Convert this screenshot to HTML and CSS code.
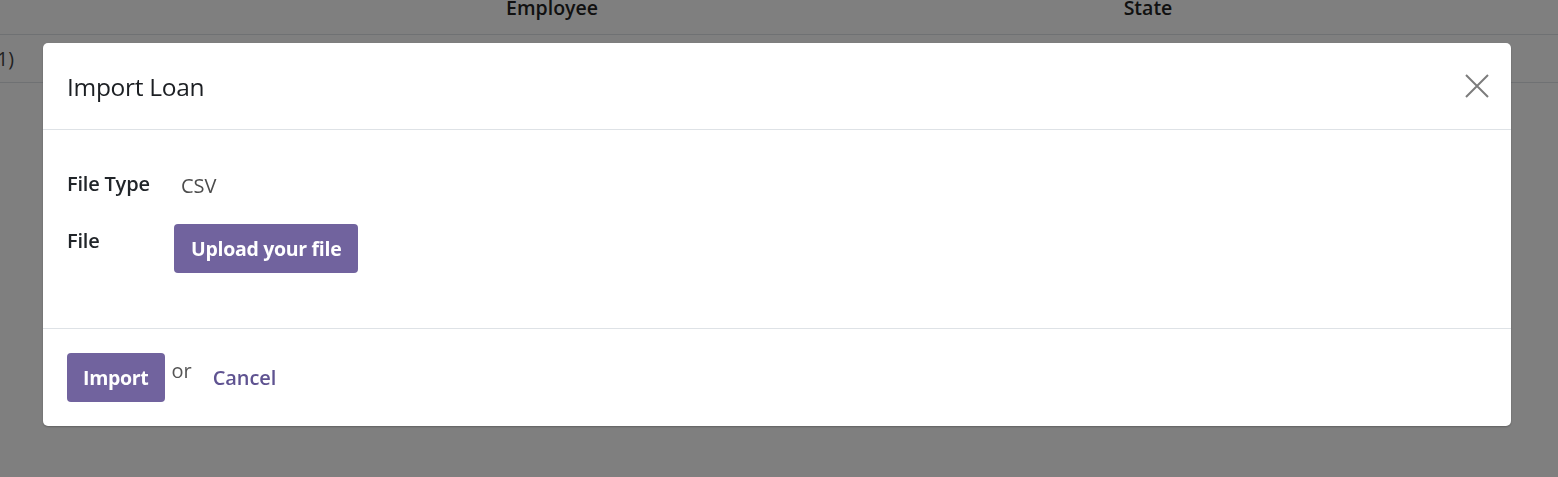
FILE: index.html
```html
<!DOCTYPE html>
<html lang="en">
<head>
<meta charset="utf-8">
<title>Import Loan</title>
<link rel="stylesheet" href="styles.css">
</head>
<body>
<div class="page">
  <div class="list">
    <div class="list-head">
      <div class="cell cell-first"></div>
      <div class="cell cell-emp">Employee</div>
      <div class="cell cell-state">State</div>
      <div class="cell"></div>
    </div>
    <div class="list-row">
      <div class="cell cell-first">1)</div>
      <div class="cell cell-emp"></div>
      <div class="cell cell-state"></div>
      <div class="cell"></div>
    </div>
  </div>
</div>
<div class="backdrop"></div>
<div class="modal">
  <div class="modal-header">
    <h4 class="modal-title">Import Loan</h4>
    <button class="close" aria-label="Close">
      <svg width="24" height="24" viewBox="0 0 24 24"><path d="M1 1 L23 23 M23 1 L1 23" stroke="#7c7c7c" stroke-width="2" fill="none"/></svg>
    </button>
  </div>
  <div class="modal-body">
    <div class="field">
      <div class="label">File Type</div>
      <div class="value value-text">CSV</div>
    </div>
    <div class="field">
      <div class="label label-file">File</div>
      <div class="value"><button class="btn btn-upload">Upload your file</button></div>
    </div>
  </div>
  <div class="modal-footer">
    <button class="btn">Import</button>
    <span class="or">or</span>
    <a class="link" href="#">Cancel</a>
  </div>
</div>
</body>
</html>
```
FILE: styles.css
```css
* { box-sizing: border-box; }
html, body {
  margin: 0;
  padding: 0;
  height: 100%;
  background: #ffffff;
  font-family: "Open Sans", "Noto Sans", sans-serif;
  color: #212529;
  overflow: hidden;
}
.page { height: 100%; }
.list { margin-top: -16px; }
.list-head, .list-row {
  display: grid;
  grid-template-columns: 253px 598px 594px 1fr;
  border-bottom: 1px solid #dee2e6;
}
.list-head { height: 51px; font-weight: 600; font-size: 19.5px; color: #222; padding-bottom: 3px; }
.list-row { height: 48px; font-size: 19.5px; color: #444; }
.cell { display: flex; align-items: center; }
.cell-emp, .cell-state { justify-content: center; }
.list-row .cell-first { margin-left: -3px; }

.backdrop {
  position: fixed;
  inset: 0;
  background: rgba(0, 0, 0, 0.5);
}
.modal {
  position: fixed;
  left: 43px;
  top: 43px;
  width: 1468px;
  height: 383px;
  background: #fff;
  border-radius: 5px;
  display: flex;
  flex-direction: column;
  box-shadow: 0 1px 2px rgba(0,0,0,0.25);
}
.modal-header {
  height: 87px;
  flex: none;
  display: flex;
  align-items: center;
  justify-content: space-between;
  padding: 0 22px 0 24px;
  border-bottom: 1px solid #dee2e6;
}
.modal-title {
  margin: 0;
  font-size: 24.5px;
  font-weight: 500;
  color: #1c1f23;
  letter-spacing: -0.3px;
}
.close {
  border: 0;
  background: none;
  padding: 0;
  width: 24px;
  height: 24px;
  display: flex;
}
.modal-body {
  flex: 1;
  padding: 40px 24px 0 24px;
  display: flex;
  flex-direction: column;
  gap: 24px;
}
.field { display: flex; align-items: flex-start; }
.label {
  width: 107px;
  flex: none;
  font-size: 20px;
  line-height: 28px;
  font-weight: 600;
  color: #212529;
  letter-spacing: -0.2px;
}
.label-file { padding-top: 3px; }
.value-text {
  padding-left: 7px;
  font-size: 20px;
  line-height: 28px;
  padding-top: 2px;
  color: #4c4c4c;
}
.btn {
  font-family: inherit;
  background: #71639e;
  color: #fff;
  border: 0;
  border-radius: 4px;
  height: 49px;
  padding: 0 16px;
  font-size: 19.5px;
  font-weight: 700;
  letter-spacing: -0.3px;
}
.btn-upload { padding: 0 17px; }
.modal-footer {
  height: 98px;
  flex: none;
  border-top: 1px solid #dee2e6;
  padding: 24px 24px 0 24px;
  display: flex;
  align-items: flex-start;
}
.or {
  margin-left: 7px;
  margin-top: 4px;
  font-size: 20px;
  color: #555;
}
.link {
  margin-left: 21px;
  margin-top: 11px;
  font-size: 20px;
  font-weight: 600;
  color: #5f5391;
  text-decoration: none;
  letter-spacing: -0.1px;
}
```
